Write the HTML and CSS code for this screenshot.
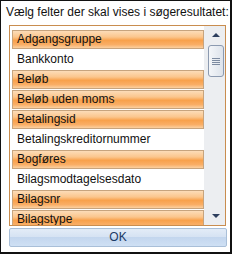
FILE: index.html
```html
<!DOCTYPE html>
<html lang="da">
<head>
    <meta charset="UTF-8">
    <title>Vælg felter</title>
    <link rel="stylesheet" href="styles.css">
</head>
<body>
    <div class="dialog">
        <div class="caption">Vælg felter der skal vises i søgeresultatet:</div>

        <!-- felt-liste med scrollbar -->
        <div class="listbox">
            <ul class="fields">
                <li class="on">Adgangsgruppe</li>
                <li>Bankkonto</li>
                <li class="on">Beløb</li>
                <li class="on">Beløb uden moms</li>
                <li class="on">Betalingsid</li>
                <li>Betalingskreditornummer</li>
                <li class="on">Bogføres</li>
                <li>Bilagsmodtagelsesdato</li>
                <li class="on">Bilagsnr</li>
                <li class="on">Bilagstype</li>
            </ul>
            <div class="scrollbar">
                <div class="arrow up"></div>
                <div class="track">
                    <div class="thumb">
                        <span class="grip"></span>
                        <span class="grip"></span>
                        <span class="grip"></span>
                        <span class="grip"></span>
                    </div>
                </div>
                <div class="arrow down"></div>
            </div>
        </div>

        <button class="ok">OK</button>
    </div>
</body>
</html>
```

FILE: styles.css
```css
body {
    margin: 0;
    padding: 0;
    background-color: #fff;
    font-family: "Liberation Sans", Arial, sans-serif;
    font-size: 12px;
    color: #000;
}
.dialog {
    box-sizing: border-box;
    width: 232px;
    height: 254px;
    border: 1px solid #111;
    border-right-width: 2px;
    border-bottom-width: 2px;
    background-color: #fff;
    padding: 4px 0 0 5px;
    display: flex;
    flex-direction: column;
}
.caption {
    height: 15px;
    line-height: 15px;
    white-space: nowrap;
    color: #111;
}
/* listen */
.listbox {
    box-sizing: border-box;
    width: 217px;
    height: 201px;
    margin: 5px 0 0 3px;
    border: 1px solid #c98d4f;
    display: flex;
    overflow: hidden;
}
.fields {
    list-style: none;
    margin: 0;
    padding: 4px 0 0 2px;
    width: 192px;
    overflow: hidden;
}
.fields li {
    box-sizing: border-box;
    height: 19px;
    line-height: 17px;
    padding-left: 4px;
    margin-bottom: 1px;
    border: 1px solid transparent;
    white-space: nowrap;
    color: #111;
}
.fields li.on {
    border-color: #c7a47e;
    background: linear-gradient(#fcdcb8 0%, #fbc68d 35%, #f8a14c 55%, #f9ae66 80%, #fbd0a0 100%);
}
/* scrollbar */
.scrollbar {
    flex: 1;
    background-color: #eceef1;
    display: flex;
    flex-direction: column;
    align-items: center;
    padding: 0 1px 0 4px;
}
.arrow {
    width: 0;
    height: 0;
    border-left: 4px solid transparent;
    border-right: 4px solid transparent;
}
.arrow.up {
    margin: 7px 0 5px;
    border-bottom: 4px solid #2d3f5e;
}
.arrow.down {
    margin: 0 0 7px;
    border-top: 4px solid #2d3f5e;
}
.track {
    flex: 1;
    align-self: stretch;
}
.thumb {
    box-sizing: border-box;
    height: 32px;
    margin-top: 3px;
    border: 1px solid #8c9ab0;
    border-radius: 3px;
    background: linear-gradient(to right, #f4f6f9, #dde3eb);
    display: flex;
    flex-direction: column;
    align-items: center;
    justify-content: center;
    gap: 1px;
}
.grip {
    width: 8px;
    height: 1px;
    background-color: #7d8ba1;
}
/* knap */
.ok {
    box-sizing: border-box;
    width: 218px;
    height: 19px;
    margin: 2px 0 0 3px;
    padding: 0;
    border: 1px solid #a9bfd8;
    border-radius: 2px;
    background: linear-gradient(#e3ecf7 0%, #d6e3f3 45%, #c3d6ee 50%, #cfe0f4 100%);
    font-family: "Liberation Sans", Arial, sans-serif;
    font-size: 12px;
    color: #1c3a66;
    line-height: 17px;
}
```
